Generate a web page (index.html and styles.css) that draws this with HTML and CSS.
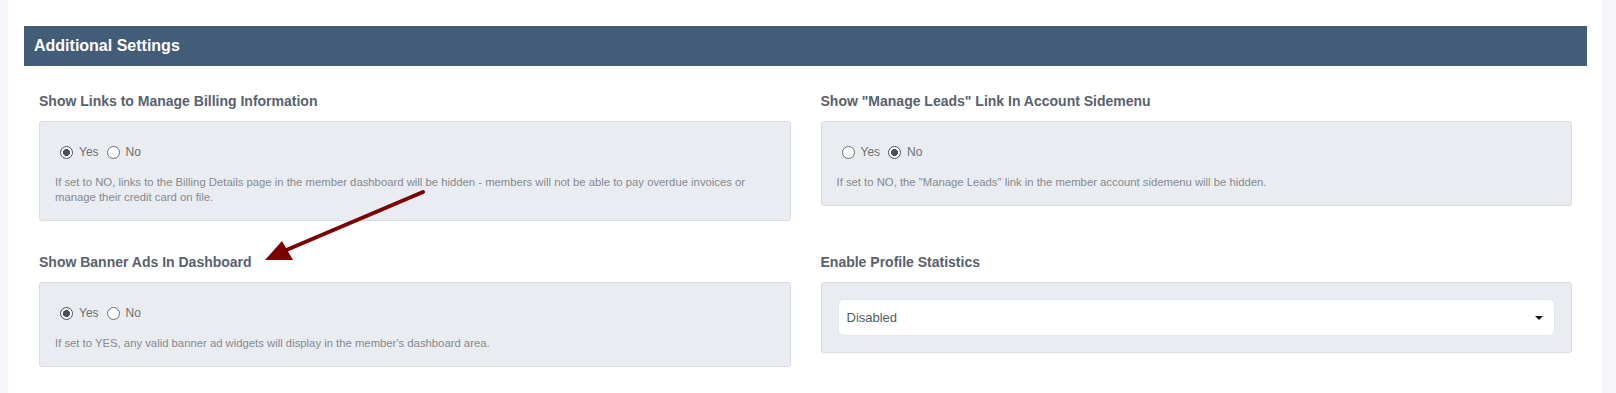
FILE: index.html
```html
<!DOCTYPE html>
<html lang="en">
<head>
    <meta charset="UTF-8">
    <meta name="viewport" content="width=device-width, initial-scale=1.0">
    <title>Additional Settings</title>
    <link rel="stylesheet" href="styles.css">
</head>
<body>
    <div class="page-card">
        <div class="panel-heading">Additional Settings</div>

        <div class="settings-grid">
            <div class="form-group">
                <label class="control-label">Show Links to Manage Billing Information</label>
                <div class="well">
                    <div class="radio-row">
                        <label class="radio-opt"><input type="radio" name="billing" checked> Yes</label>
                        <label class="radio-opt"><input type="radio" name="billing"> No</label>
                    </div>
                    <p class="help-text">If set to NO, links to the Billing Details page in the member dashboard will be hidden - members will not be able to pay overdue invoices or manage their credit card on file.</p>
                </div>
            </div>

            <div class="form-group">
                <label class="control-label">Show "Manage Leads" Link In Account Sidemenu</label>
                <div class="well">
                    <div class="radio-row">
                        <label class="radio-opt"><input type="radio" name="leads"> Yes</label>
                        <label class="radio-opt"><input type="radio" name="leads" checked> No</label>
                    </div>
                    <p class="help-text">If set to NO, the "Manage Leads" link in the member account sidemenu will be hidden.</p>
                </div>
            </div>

            <div class="form-group">
                <label class="control-label">Show Banner Ads In Dashboard</label>
                <div class="well">
                    <div class="radio-row">
                        <label class="radio-opt"><input type="radio" name="banner" checked> Yes</label>
                        <label class="radio-opt"><input type="radio" name="banner"> No</label>
                    </div>
                    <p class="help-text">If set to YES, any valid banner ad widgets will display in the member's dashboard area.</p>
                </div>
            </div>

            <div class="form-group">
                <label class="control-label">Enable Profile Statistics</label>
                <div class="well well-select">
                    <div class="select-wrap">
                        <select class="form-select">
                            <option>Disabled</option>
                            <option>Enabled</option>
                        </select>
                    </div>
                </div>
            </div>
        </div>
    </div>

    <!-- annotation arrow drawn over the page -->
    <svg class="annotation" width="1616" height="393" viewBox="0 0 1616 393">
        <line x1="423" y1="192" x2="284" y2="251" stroke="#7b0000" stroke-width="4" stroke-linecap="round"/>
        <polygon points="265,260 282,241 293,260" fill="#7b0000"/>
    </svg>
</body>
</html>
```

FILE: styles.css
```css
* {
    margin: 0;
    padding: 0;
    box-sizing: border-box;
}

body {
    position: relative;
    height: 393px;
    overflow: hidden;
    background: #f4f6fa;
    font-family: "Liberation Sans", Arial, sans-serif;
    color: #555f6d;
}

.page-card {
    margin-left: 8px;
    width: 1594px;
    min-height: 393px;
    background: #ffffff;
    padding: 26px 15px 0 16px;
}

.panel-heading {
    height: 40px;
    line-height: 40px;
    padding-left: 10px;
    background: #435c77;
    color: #ffffff;
    font-size: 16px;
    font-weight: bold;
}

.settings-grid {
    display: grid;
    grid-template-columns: 1fr 1fr;
    column-gap: 30px;
    row-gap: 31px;
    align-items: start;
    padding: 25px 15px 0;
}

.control-label {
    display: block;
    font-size: 14px;
    line-height: 20px;
    font-weight: bold;
    color: #58616e;
    margin-bottom: 10px;
}

.well {
    background: #e9ecf0;
    border: 1px solid #d9dde3;
    border-radius: 3px;
    padding: 15px 15px 15px;
}

.radio-row {
    display: flex;
    align-items: center;
    gap: 8px;
    height: 20px;
    margin-top: 5px;
    padding-left: 5px;
}

.radio-opt {
    display: inline-flex;
    align-items: center;
    gap: 6px;
    font-size: 12px;
    color: #6b7076;
}

.radio-opt input {
    appearance: none;
    -webkit-appearance: none;
    width: 13px;
    height: 13px;
    border: 1px solid #6a6e74;
    border-radius: 50%;
    background: #ffffff;
    margin: 0;
}

.radio-opt input:checked {
    border: 1.5px solid #4a5058;
    background: radial-gradient(circle, #4a5058 0 3.2px, #ffffff 3.8px);
}

.help-text {
    margin-top: 13px;
    font-size: 11.3px;
    line-height: 15px;
    color: #858a91;
}

.well-select {
    padding: 16px;
}

.select-wrap {
    position: relative;
}

.select-wrap::after {
    content: "";
    position: absolute;
    right: 12px;
    top: 17px;
    border-left: 4px solid transparent;
    border-right: 4px solid transparent;
    border-top: 4px solid #111111;
}

.form-select {
    appearance: none;
    -webkit-appearance: none;
    display: block;
    width: 100%;
    height: 37px;
    padding: 0 8px;
    background: #ffffff;
    border: 1px solid #e3e6ea;
    border-radius: 6px;
    font-family: "Liberation Sans", Arial, sans-serif;
    font-size: 13px;
    color: #555b63;
    outline: none;
}

.annotation {
    position: absolute;
    left: 0;
    top: 0;
    pointer-events: none;
}
```
